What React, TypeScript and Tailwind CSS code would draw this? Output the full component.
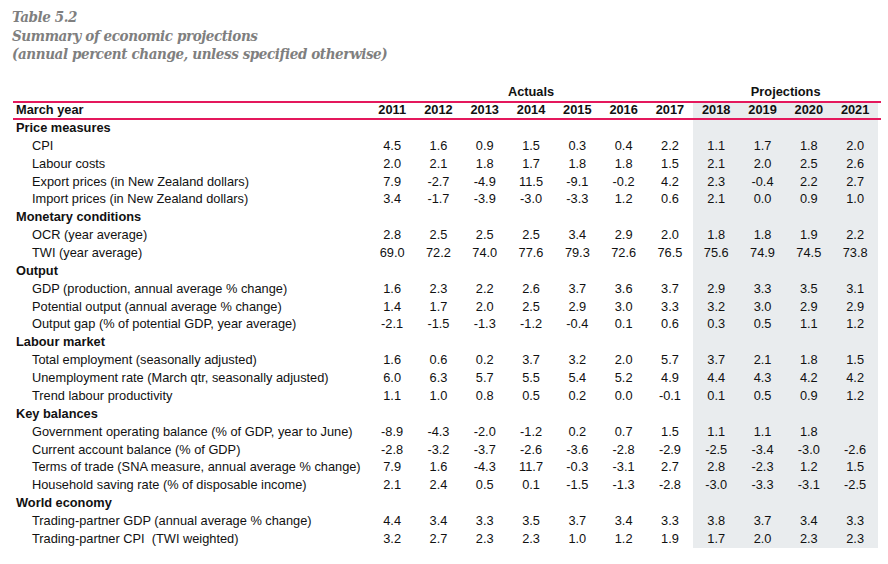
import React from 'react';

type Row = { label: string; section?: boolean; values?: string[] };

const years = ['2011', '2012', '2013', '2014', '2015', '2016', '2017', '2018', '2019', '2020', '2021'];

const rows: Row[] = [
  { label: 'Price measures', section: true },
  { label: 'CPI', values: ['4.5', '1.6', '0.9', '1.5', '0.3', '0.4', '2.2', '1.1', '1.7', '1.8', '2.0'] },
  { label: 'Labour costs', values: ['2.0', '2.1', '1.8', '1.7', '1.8', '1.8', '1.5', '2.1', '2.0', '2.5', '2.6'] },
  { label: 'Export prices (in New Zealand dollars)', values: ['7.9', '-2.7', '-4.9', '11.5', '-9.1', '-0.2', '4.2', '2.3', '-0.4', '2.2', '2.7'] },
  { label: 'Import prices (in New Zealand dollars)', values: ['3.4', '-1.7', '-3.9', '-3.0', '-3.3', '1.2', '0.6', '2.1', '0.0', '0.9', '1.0'] },
  { label: 'Monetary conditions', section: true },
  { label: 'OCR (year average)', values: ['2.8', '2.5', '2.5', '2.5', '3.4', '2.9', '2.0', '1.8', '1.8', '1.9', '2.2'] },
  { label: 'TWI (year average)', values: ['69.0', '72.2', '74.0', '77.6', '79.3', '72.6', '76.5', '75.6', '74.9', '74.5', '73.8'] },
  { label: 'Output', section: true },
  { label: 'GDP (production, annual average % change)', values: ['1.6', '2.3', '2.2', '2.6', '3.7', '3.6', '3.7', '2.9', '3.3', '3.5', '3.1'] },
  { label: 'Potential output (annual average % change)', values: ['1.4', '1.7', '2.0', '2.5', '2.9', '3.0', '3.3', '3.2', '3.0', '2.9', '2.9'] },
  { label: 'Output gap (% of potential GDP, year average)', values: ['-2.1', '-1.5', '-1.3', '-1.2', '-0.4', '0.1', '0.6', '0.3', '0.5', '1.1', '1.2'] },
  { label: 'Labour market', section: true },
  { label: 'Total employment (seasonally adjusted)', values: ['1.6', '0.6', '0.2', '3.7', '3.2', '2.0', '5.7', '3.7', '2.1', '1.8', '1.5'] },
  { label: 'Unemployment rate (March qtr, seasonally adjusted)', values: ['6.0', '6.3', '5.7', '5.5', '5.4', '5.2', '4.9', '4.4', '4.3', '4.2', '4.2'] },
  { label: 'Trend labour productivity', values: ['1.1', '1.0', '0.8', '0.5', '0.2', '0.0', '-0.1', '0.1', '0.5', '0.9', '1.2'] },
  { label: 'Key balances', section: true },
  { label: 'Government operating balance (% of GDP, year to June)', values: ['-8.9', '-4.3', '-2.0', '-1.2', '0.2', '0.7', '1.5', '1.1', '1.1', '1.8', ''] },
  { label: 'Current account balance (% of GDP)', values: ['-2.8', '-3.2', '-3.7', '-2.6', '-3.6', '-2.8', '-2.9', '-2.5', '-3.4', '-3.0', '-2.6'] },
  { label: 'Terms of trade (SNA measure, annual average % change)', values: ['7.9', '1.6', '-4.3', '11.7', '-0.3', '-3.1', '2.7', '2.8', '-2.3', '1.2', '1.5'] },
  { label: 'Household saving rate (% of disposable income)', values: ['2.1', '2.4', '0.5', '0.1', '-1.5', '-1.3', '-2.8', '-3.0', '-3.3', '-3.1', '-2.5'] },
  { label: 'World economy', section: true },
  { label: 'Trading-partner GDP (annual average % change)', values: ['4.4', '3.4', '3.3', '3.5', '3.7', '3.4', '3.3', '3.8', '3.7', '3.4', '3.3'] },
  { label: 'Trading-partner CPI  (TWI weighted)', values: ['3.2', '2.7', '2.3', '2.3', '1.0', '1.2', '1.9', '1.7', '2.0', '2.3', '2.3'] },
];

const grid = 'grid grid-cols-[356px_repeat(11,46.3px)] items-center';

function Cell({ i, children }: { i: number; children?: React.ReactNode }) {
  return (
    <div className={`h-full flex items-center justify-center ${i >= 7 ? 'bg-[#e9ecee]' : ''}`}>
      {children}
    </div>
  );
}

export default function App() {
  return (
    <div className="w-[888px] h-[564px] bg-white text-[#111] overflow-hidden">
      {/* Title */}
      <div className="pl-[12px] pt-[8px] text-[15px] leading-[18.5px] italic font-bold text-[#7f7f7f] font-['DejaVu_Serif_Condensed','DejaVu_Serif',serif] tracking-[-0.4px]">
        <div>Table 5.2</div>
        <div>Summary of economic projections</div>
        <div>(annual percent change, unless specified otherwise)</div>
      </div>

      <div className="ml-[13px] mt-[20px] w-[868px] font-['Liberation_Sans',Arial,sans-serif] text-[12.8px] leading-none">
        {/* Actuals / Projections */}
        <div className="flex h-[17px] items-center font-bold">
          <div className="w-[356px]" />
          <div className="w-[324.1px] text-center">Actuals</div>
          <div className="w-[185.2px] text-center">Projections</div>
        </div>

        {/* Header */}
        <div className={`${grid} h-[19px] border-y-2 border-[#e4185c] font-bold`}>
          <div className="pl-[3px]">March year</div>
          {years.map((y, i) => (
            <Cell key={y} i={i}>
              {y}
            </Cell>
          ))}
        </div>

        {/* Body */}
        {rows.map((r) => (
          <div key={r.label} className={`${grid} h-[17.87px]`}>
            <div className={r.section ? 'pl-[3px] font-bold' : 'pl-[19px] whitespace-pre'}>{r.label}</div>
            {years.map((y, i) => (
              <Cell key={y} i={i}>
                {r.values ? r.values[i] : ''}
              </Cell>
            ))}
          </div>
        ))}
      </div>
    </div>
  );
}
